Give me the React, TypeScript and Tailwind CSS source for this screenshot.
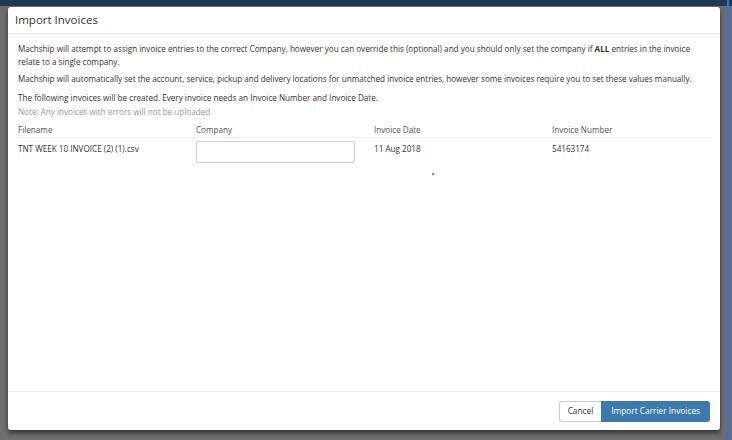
import React from 'react';

const font = { fontFamily: '"Open Sans", "Liberation Sans", sans-serif' };

export default function App() {
  const rows = [
    { file: 'TNT WEEK 10 INVOICE (2) (1).csv', date: '11 Aug 2018', number: '54163174' },
  ];

  return (
    <div className="w-[732px] h-[440px] bg-[#6e6e6e] flex flex-col overflow-hidden" style={font}>
      {/* dimmed app header behind the dialog */}
      <div className="h-[6px] bg-[#1f3a4e] shrink-0" />
      <div className="flex flex-1 min-h-0">
        <div className="ml-[8px] mt-[1px] w-[712px] h-[423px] bg-white rounded-[3px] shadow-[0_3px_5px_rgba(0,0,0,0.55)] flex flex-col relative">
          {/* Header */}
          <div className="h-[27px] border-b border-[#e5e5e5] flex items-center px-[7px] shrink-0">
            <h4 className="text-[11.5px] text-[#333] font-normal">Import Invoices</h4>
          </div>

          {/* Body */}
          <div className="flex-1 px-[10px] pt-[8px] text-[8.15px] leading-[13px] text-[#333]">
            <p className="mb-[4px]">
              Machship will attempt to assign invoice entries to the correct Company, however you can override this (optional) and you should only set the company if <b>ALL</b> entries in the invoice relate to a single company.
            </p>
            <p className="mb-[6px]">
              Machship will automatically set the account, service, pickup and delivery locations for unmatched invoice entries, however some invoices require you to set these values manually.
            </p>
            <p className="mb-[1px]">The following invoices will be created. Every invoice needs an Invoice Number and Invoice Date.</p>
            <p className="text-[#999]">Note: Any invoices with errors will not be uploaded</p>

            <div className="mt-[4px] w-[692px]">
              <div className="grid grid-cols-[178px_178px_178px_1fr] border-b border-[#eee] h-[16px] items-center text-[#555]">
                <span>Filename</span>
                <span>Company</span>
                <span>Invoice Date</span>
                <span>Invoice Number</span>
              </div>
              {rows.map((r) => (
                <div key={r.file} className="grid grid-cols-[178px_178px_178px_1fr] pt-[3px]">
                  <span className="pt-[1px]">{r.file}</span>
                  <div>
                    <input
                      type="text"
                      className="w-[159px] h-[22px] border border-[#ccc] rounded-[2px] outline-none"
                    />
                  </div>
                  <span className="pt-[1px]">{r.date}</span>
                  <span className="pt-[1px]">{r.number}</span>
                </div>
              ))}
            </div>
            <div className="absolute left-[424px] top-[166px] w-[2px] h-[2px] bg-[#c0392b] rounded-full" />
          </div>

          {/* Footer */}
          <div className="h-[39px] border-t border-[#eee] flex items-center justify-end px-[10px] shrink-0">
            <button className="h-[21px] px-[8px] border border-[#ccc] border-r-0 rounded-l-[3px] bg-white text-[8.3px] text-[#333]">
              Cancel
            </button>
            <button className="h-[21px] px-[10px] rounded-r-[3px] bg-[#3b7bab] text-[8.3px] text-white">
              Import Carrier Invoices
            </button>
          </div>
        </div>
        <div className="w-[7px]" />
        <div className="w-[2px] bg-[#1a7be8] -mt-[6px]" />
      </div>
    </div>
  );
}
